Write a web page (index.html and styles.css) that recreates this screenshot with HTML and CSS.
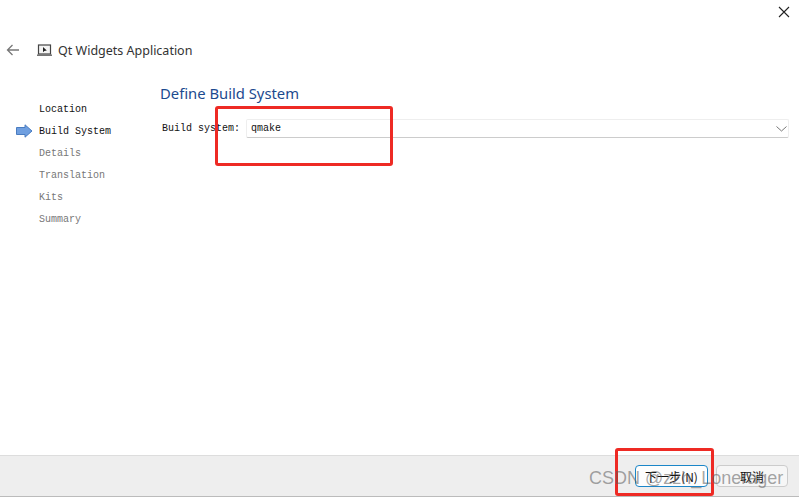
FILE: index.html
```html
<!DOCTYPE html>
<html lang="en">
<head>
  <meta charset="UTF-8">
  <title>Qt Widgets Application</title>
  <link rel="stylesheet" href="styles.css">
</head>
<body>
<div class="wizard">
  <div class="close-row">
    <svg class="close" width="12" height="12" viewBox="0 0 12 12"><path d="M1 1L11 11M11 1L1 11" stroke="#222" stroke-width="1.1" fill="none"/></svg>
  </div>
  <div class="header">
    <svg class="back" width="14" height="12" viewBox="0 0 14 12"><path d="M13 6H1.5M6.5 1L1.5 6L6.5 11" stroke="#777" stroke-width="1.3" fill="none"/></svg>
    <svg class="app-icon" width="15" height="12" viewBox="0 0 15 12">
      <rect x="1.5" y="1" width="12" height="9" fill="#f4f4f4" stroke="#444" stroke-width="1.2"/>
      <path d="M0 11.2H15" stroke="#666" stroke-width="1.4"/>
      <path d="M6 3L6 8.2L7.4 7L9.8 6.6Z" fill="#222"/>
    </svg>
    <span class="header-title">Qt Widgets Application</span>
  </div>
  <div class="main">
    <ul class="steps">
      <li class="step done">Location</li>
      <li class="step current">
        <svg class="step-arrow" width="17" height="14" viewBox="0 0 17 14">
          <path d="M0.5 3.5H9V0.8L16 7L9 13.2V10.5H0.5Z" fill="#6f9fe0" stroke="#4a7cc0"/>
        </svg>
        Build System
      </li>
      <li class="step">Details</li>
      <li class="step">Translation</li>
      <li class="step">Kits</li>
      <li class="step">Summary</li>
    </ul>
    <div class="content">
      <h1 class="page-title">Define Build System</h1>
      <div class="field">
        <label class="field-label">Build system:</label>
        <div class="combo">
          <span>qmake</span>
          <svg width="11" height="6" viewBox="0 0 11 6"><path d="M0.5 0.5L5.5 5L10.5 0.5" stroke="#777" fill="none"/></svg>
        </div>
      </div>
    </div>
  </div>
  <div class="footer">
    <button class="btn btn-primary">下一步(N)</button>
    <button class="btn">取消</button>
  </div>
</div>
<div class="mark mark-combo"></div>
<div class="mark mark-next"></div>
<div class="watermark">CSDN @zzh_Lonerager</div>
</body>
</html>
```

FILE: styles.css
```css
* {
    box-sizing: border-box;
}

html, body {
    width: 100%;
    height: 100%;
    margin: 0;
    padding: 0;
    overflow: hidden;
    background: #ffffff;
}

.wizard {
    display: flex;
    flex-direction: column;
    width: 799px;
    height: 497px;
    font-family: "Liberation Mono", monospace;
    font-size: 10px;
    color: #111;
}

.close-row {
    display: flex;
    justify-content: flex-end;
    height: 40px;
    padding: 6px 9px 0 0;
}

.header {
    display: flex;
    align-items: center;
    height: 20px;
    padding-left: 6px;
}

.back {
    margin-right: 17px;
}

.app-icon {
    margin-right: 6px;
}

.header-title {
    font-family: "Noto Sans", sans-serif;
    font-size: 12.5px;
    color: #333;
}

.main {
    display: flex;
    flex: 1;
}

.steps {
    width: 160px;
    margin: 0;
    padding: 39px 0 0 39px;
    list-style: none;
}

.step {
    position: relative;
    height: 22px;
    line-height: 22px;
    color: #777;
}

.step.done,
.step.current {
    color: #111;
}

.step-arrow {
    position: absolute;
    left: -23px;
    top: 3px;
}

.content {
    flex: 1;
    padding: 23px 10px 0 0;
}

.page-title {
    margin: 0;
    height: 24px;
    font-family: "Noto Sans", sans-serif;
    font-size: 14.8px;
    font-weight: 400;
    line-height: 20px;
    color: #1c4a8f;
}

.field {
    display: flex;
    align-items: center;
    margin-top: 12px;
}

.field-label {
    width: 86px;
    padding-left: 2px;
}

.combo {
    display: flex;
    flex: 1;
    align-items: center;
    justify-content: space-between;
    height: 19px;
    padding: 0 1px 0 4px;
    border: 1px solid #eeeeee;
    border-bottom-color: #cccccc;
    border-radius: 2px;
}

.footer {
    display: flex;
    justify-content: flex-end;
    align-items: center;
    gap: 8px;
    height: 42px;
    padding: 0 11px 0 0;
    background: #eeeeee;
    border-top: 1px solid #dddddd;
    border-bottom: 1px solid #bbbbbb;
}

.btn {
    height: 22px;
    width: 72px;
    padding: 0;
    font-family: "Noto Sans CJK SC", sans-serif;
    font-size: 12px;
    color: #111;
    background: #f6f6f6;
    border: 1px solid #cccccc;
    border-radius: 4px;
}

.btn-primary {
    width: 73px;
    background: #fdfdfd;
    border-color: #1b86c8;
}

/* red annotations drawn over the screenshot */
.mark {
    position: absolute;
    border: 3px solid #ee2a24;
    border-radius: 3px;
}

.mark-combo {
    left: 215px;
    top: 106px;
    width: 178px;
    height: 60px;
}

.mark-next {
    left: 615px;
    top: 448px;
    width: 99px;
    height: 48px;
}

.watermark {
    position: absolute;
    left: 589px;
    top: 467px;
    font-family: "Liberation Sans", sans-serif;
    font-size: 18px;
    line-height: 22px;
    white-space: nowrap;
    color: rgba(90, 90, 90, 0.55);
}
```
